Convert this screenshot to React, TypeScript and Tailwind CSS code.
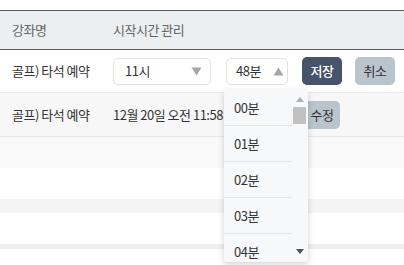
import React from 'react';

const minutes = ['00분', '01분', '02분', '03분', '04분'];

const Caret = ({ up }: { up?: boolean }) => (
  <svg width="11" height="9" viewBox="0 0 11 9" className="fill-[#a6a6a6]">
    {up ? <path d="M5.5 0.5 L10.5 8.5 L0.5 8.5 Z" /> : <path d="M0.5 0.5 L10.5 0.5 L5.5 8.5 Z" />}
  </svg>
);

export default function App() {
  return (
    <div
      className="relative w-[404px] h-[265px] overflow-hidden bg-white pt-[10px] text-[13px] tracking-[-0.5px] text-[#333]"
      style={{ fontFamily: '"Noto Sans CJK KR", "Noto Sans", sans-serif' }}
    >
      {/* 헤더 */}
      <div className="flex items-center h-[40px] bg-[#eceff1] border-y border-[#5a5a5a] text-[#666]">
        <div className="w-[113px] pl-[12px]">강좌명</div>
        <div>시작시간 관리</div>
      </div>

      {/* 편집 중인 행 */}
      <div className="flex items-center h-[43px] border-b border-[#ececec]">
        <div className="w-[113px] pl-[12px]">골프) 타석 예약</div>
        <div className="flex items-center">
          <div className="flex items-center justify-between w-[98px] h-[27px] pl-[11px] pr-[8px] border border-[#e2e2e2] rounded-[5px] bg-white">
            <span>11시</span>
            <Caret />
          </div>
          <div className="flex items-center gap-[12px] w-[62px] h-[27px] ml-[15px] pl-[9px] border border-[#e2e2e2] rounded-[5px] bg-white">
            <span>48분</span>
            <Caret up />
          </div>
          <button className="w-[40px] h-[28px] ml-[14px] rounded-[5px] bg-[#45536b] text-white text-[13px] font-medium">
            저장
          </button>
          <button className="w-[40px] h-[28px] ml-[13px] rounded-[5px] bg-[#b9c5cc] text-[#333] text-[13px]">
            취소
          </button>
        </div>
      </div>

      {/* 저장된 행 */}
      <div className="flex items-center h-[44px] bg-[#f7f7f7] border-b border-[#e6e6e6]">
        <div className="w-[113px] pl-[12px]">골프) 타석 예약</div>
        <div className="flex items-center">
          <span className="w-[191px] whitespace-nowrap">12월 20일 오전 11:58</span>
          <button className="w-[36px] h-[28px] rounded-[5px] bg-[#b9c5cc] text-[#333] text-[13px]">
            수정
          </button>
        </div>
      </div>

      <div className="h-[31px] bg-[#f9f9f9]" />
      <div className="h-[31px] bg-white" />
      <div className="h-[14px] bg-[#f4f4f4]" />
      <div className="h-[31px] bg-white" />
      <div className="h-[5px] bg-[#eeeeee]" />

      {/* 분 선택 목록 */}
      <div className="absolute left-[224px] top-[90px] flex w-[84px] h-[172px] bg-[#f7f8f9] rounded-[3px] shadow-[0_2px_6px_rgba(0,0,0,0.18)] overflow-hidden">
        <div className="flex-1 flex flex-col">
          {minutes.map((m) => (
            <div key={m} className="h-[36px] shrink-0 flex items-center pl-[10px] border-b border-[#e3e5e8]">
              {m}
            </div>
          ))}
        </div>
        <div className="relative w-[16px] bg-[#f7f8f9]">
          <svg width="8" height="5" viewBox="0 0 8 5" className="absolute left-[4px] top-[7px] fill-[#b0b0b0]">
            <path d="M4 0 L8 5 L0 5 Z" />
          </svg>
          <div className="absolute left-[1px] top-[17px] w-[13px] h-[17px] bg-[#c1c1c1]" />
          <svg width="8" height="5" viewBox="0 0 8 5" className="absolute left-[4px] bottom-[8px] fill-[#505050]">
            <path d="M0 0 L8 0 L4 5 Z" />
          </svg>
        </div>
      </div>
    </div>
  );
}
